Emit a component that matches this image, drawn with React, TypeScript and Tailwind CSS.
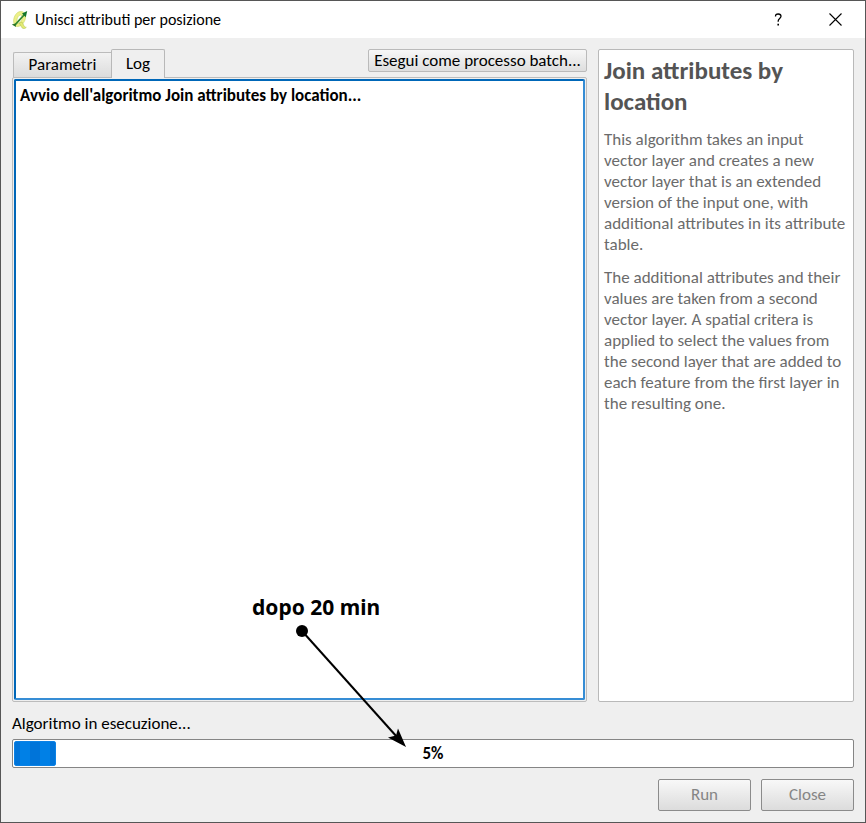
import { useState } from "react";

const uiFont = "font-['Carlito','Lato',sans-serif]";

function LeafQIcon() {
  return (
    <svg width="18" height="20" viewBox="0 0 18 20" aria-hidden="true">
      <path
        d="M9.500 1.500C5.600 1.700 2.600 6.500 2.600 11.200 2.600 14.600 4.200 16.600 6.800 16.500 11 16.200 14.600 11.200 14.600 6.600 14.600 3.400 12.700 1.400 9.500 1.500ZM9.300 5C10.600 5 11.200 5.900 11.200 7.400 11.200 10 9.300 13 7.400 13.100 6.400 13.100 5.900 12.200 5.900 10.900 5.900 8.200 7.400 5.100 9.300 5Z"
        fill="#edf08a"
        fillRule="evenodd"
        stroke="#c9d65e"
        strokeWidth=".6"
      />
      <path d="M8.300 13 11 17.800C12.200 19 14.300 18.600 15.300 17.300 14 17.300 13.300 16.500 12.800 15.500L11 12Z" fill="#e3ea74" stroke="#b3c653" strokeWidth=".6" />
      <path d="M4 14.800 13.500 4.500" stroke="#34872f" strokeWidth="1.800" />
      <path d="M16.200 1 11 3.400 14.800 7.200Z" fill="#12752b" />
      <path d="M.800 14.600 4.600 13.600 5 17Z" fill="#267326" />
    </svg>
  );
}

function TitleBar() {
  return (
    <header className="flex h-[37px] items-center bg-white pl-[10px]">
      <LeafQIcon />
      <h1 className="ml-[6px] flex-1 text-base leading-5">Unisci attributi per posizione</h1>
      <button type="button" aria-label="Help" className="flex h-full w-[57px] items-center justify-center">
        <svg width="9" height="13" viewBox="0 0 9 13" fill="none" stroke="black" strokeWidth="1.300" aria-hidden="true">
          <path d="M1.500 3.500C1.500 1.800 2.700 1 4.200 1S7 1.900 7 3.300C7 5.500 4.200 5.600 4.200 8v.8" />
          <path d="M4.200 10.800v1.700" strokeWidth="1.600" />
        </svg>
      </button>
      <button type="button" aria-label="Close window" className="mr-px flex h-full w-[57px] items-center justify-center">
        <svg width="13" height="13" viewBox="0 0 13 13" stroke="black" strokeWidth="1.100" aria-hidden="true">
          <path d="M.5.500l12 12M12.500.500l-12 12" />
        </svg>
      </button>
    </header>
  );
}

function LogPanel() {
  const [tab, setTab] = useState("log");
  return (
    <section className="flex min-w-0 flex-1 flex-col">
      <div className="flex items-start justify-between">
        <div role="tablist" className="flex h-[29px] items-end">
          <button
            type="button"
            role="tab"
            aria-selected={tab === "parametri"}
            onClick={() => setTab("parametri")}
            className="ml-px h-[26px] w-[98px] rounded-tl-xs border border-r-0 border-[#bbbbbb] bg-linear-to-b from-[#f2f2f2] to-[#dcdcdc] text-[17px] leading-5"
          >
            Parametri
          </button>
          <button
            type="button"
            role="tab"
            aria-selected={tab === "log"}
            onClick={() => setTab("log")}
            className="z-10 h-[29px] w-[54px] rounded-t-xs border border-b-0 border-[#b8b8b8] bg-[#efefef] text-[17px] leading-5"
          >
            Log
          </button>
        </div>
        <button
          type="button"
          className="h-[23px] w-[219px] rounded-xs border border-[#bababa] bg-linear-to-b from-[#f7f7f7] to-[#dedede] text-[17px] leading-5 whitespace-nowrap"
        >
          Esegui come processo batch...
        </button>
      </div>
      <div className="-mt-px flex flex-1 rounded-xs border border-[#bcbcbc] bg-[#efefef] p-px">
        <textarea
          readOnly
          aria-label="Log"
          className="block w-full flex-1 resize-none rounded-xs border-2 border-t-[#0067b8] border-r-[#368dd5] border-b-[#368dd5] border-l-[#0067b8] bg-white px-1 py-[5px] text-[17px] leading-5 font-bold outline-none"
          defaultValue="Avvio dell'algoritmo Join attributes by location..."
        />
      </div>
    </section>
  );
}

function HelpPanel() {
  return (
    <aside className="w-[256px] rounded-xs border border-[#b9b9b9] bg-white px-[5px] py-[5px] text-[#6b6b6b]">
      <h2 className="text-[25px] leading-[31px] font-bold text-[#545454]">
        Join attributes by
        <br />
        location
      </h2>
      <p className="mt-3 text-[17px] leading-[21px] whitespace-nowrap">
        This algorithm takes an input
        <br />
        vector layer and creates a new
        <br />
        vector layer that is an extended
        <br />
        version of the input one, with
        <br />
        additional attributes in its attribute
        <br />
        table.
      </p>
      <p className="mt-3 text-[17px] leading-[21px] whitespace-nowrap">
        The additional attributes and their
        <br />
        values are taken from a second
        <br />
        vector layer. A spatial critera is
        <br />
        applied to select the values from
        <br />
        the second layer that are added to
        <br />
        each feature from the first layer in
        <br />
        the resulting one.
      </p>
    </aside>
  );
}

function Progress({ value }: { value: number }) {
  return (
    <div
      role="progressbar"
      aria-labelledby="status"
      aria-valuenow={value}
      aria-valuemin={0}
      aria-valuemax={100}
      className="relative flex h-[29px] items-center rounded-xs border border-[#858585] bg-white p-px"
    >
      <div
        className="h-full rounded-xs border border-[#0b82e6] bg-[repeating-linear-gradient(90deg,#0074d9_0px,#0074d9_5px,#0080e6_5px,#0080e6_15px,#0074d9_15px,#0074d9_25px,#0080e6_25px,#0080e6_35px,#0074d9_35px,#0074d9_40px)]"
        style={{ width: `${value}%` }}
      />
      <span className="absolute inset-0 flex items-center justify-center text-[17px] leading-5 font-bold">{value}%</span>
    </div>
  );
}

function Annotation() {
  return (
    <div className="pointer-events-none absolute bottom-[71px] left-[251px]">
      <p className="font-['Noto_Sans',sans-serif] text-[21px] leading-8 font-bold whitespace-nowrap">dopo 20 min</p>
      <svg width="156" height="128" viewBox="0 0 156 128" aria-hidden="true">
        <circle cx="50" cy="8" r="6" />
        <path d="M50 8 145 114" stroke="black" strokeWidth="2" />
        <path d="M154 124 136 114.500 144 112.500 146 105.500Z" />
      </svg>
    </div>
  );
}

export default function App() {
  return (
    <div className={`${uiFont} relative flex min-h-screen flex-col border border-[#565656] bg-[#efefef] text-black`}>
      <TitleBar />
      <main className="flex flex-1 flex-col px-[11px] pt-[11px] pb-[11px]">
        <div className="flex flex-1 gap-[11px]">
          <LogPanel />
          <HelpPanel />
        </div>
        <p id="status" className="mt-3 mb-[5px] text-[17px] leading-5">
          Algoritmo in esecuzione...
        </p>
        <Progress value={5} />
        <div className="mt-[11px] flex justify-end gap-[10px]">
          <button
            type="button"
            disabled
            className="h-8 w-[93px] rounded-xs border border-[#8b8b8b] bg-linear-to-b from-[#f8f8f8] to-[#dcdcdc] text-[17px] leading-5 text-[#858585]"
          >
            Run
          </button>
          <button
            type="button"
            disabled
            className="h-8 w-[93px] rounded-xs border border-[#8b8b8b] bg-linear-to-b from-[#f8f8f8] to-[#dcdcdc] text-[17px] leading-5 text-[#858585]"
          >
            Close
          </button>
        </div>
      </main>
      <Annotation />
    </div>
  );
}
